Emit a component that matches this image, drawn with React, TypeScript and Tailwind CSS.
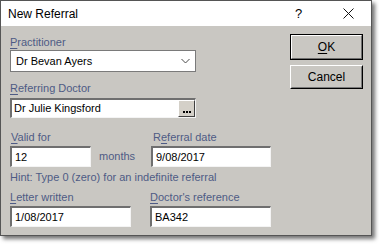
const Label = ({ pre, key1, post, className = '' }: { pre?: string; key1: string; post: string; className?: string }) => (
    <div className={`h-[14px] leading-[14px] text-[#4e5b85] ${className}`}>
        {pre}
        <span className="underline underline-offset-[2px]">{key1}</span>
        {post}
    </div>
);

const Edit = ({ value, className = '' }: { value: string; className?: string }) => (
    <div
        className={`h-[21px] bg-white border-t-2 border-l-2 border-r border-b border-t-[#6f6f6f] border-l-[#6f6f6f] border-r-[#f4f4f4] border-b-[#f4f4f4] pl-[3px] leading-[18px] text-black flex items-center ${className}`}
    >
        {value}
    </div>
);

export default function App() {
    return (
        <div className="w-[379px] h-[244px] bg-white font-['Liberation_Sans',Arial,sans-serif] text-[11px]">
            <div className="w-[372px] h-[236px] border border-[#555555] bg-[#c9c7c2] shadow-[3px_3px_4px_rgba(0,0,0,0.55)] flex flex-col">
                {/* Title bar */}
                <div className="h-[25px] bg-white flex items-center pl-[7px] text-[12px] text-black">
                    <span className="flex-1">New Referral</span>
                    <span className="w-[12px] text-[13px] mr-[36px]">?</span>
                    <svg width="11" height="11" viewBox="0 0 11 11" className="mr-[17px]">
                        <path d="M0.5 0.5 L10.5 10.5 M10.5 0.5 L0.5 10.5" stroke="#111" strokeWidth="1" />
                    </svg>
                </div>

                {/* Body */}
                <div className="flex-1 flex">
                    <div className="w-[280px] pl-[9px] flex flex-col">
                        <Label key1="P" post="ractitioner" className="mt-[9px]" />
                        <div className="mt-[1px] w-[186px] h-[22px] bg-white border border-[#7a7a7a] flex items-center pl-[5px] pr-[5px] text-black">
                            <span className="flex-1">Dr Bevan Ayers</span>
                            <svg width="9" height="6" viewBox="0 0 9 6">
                                <path d="M0.5 1 L4.5 5 L8.5 1" fill="none" stroke="#4a4a4a" strokeWidth="1" />
                            </svg>
                        </div>

                        <Label key1="R" post="eferring Doctor" className="mt-[9px]" />
                        <div className="mt-[3px] w-[186px] h-[20px] bg-white border-t-2 border-l-2 border-r border-b border-t-[#6f6f6f] border-l-[#6f6f6f] border-r-[#f4f4f4] border-b-[#f4f4f4] flex items-center pl-[2px] text-black">
                            <span className="flex-1">Dr Julie Kingsford</span>
                            <div className="w-[17px] h-[17px] bg-[#d4d0c8] border border-t-white border-l-white border-r-[#404040] border-b-[#404040] flex items-end justify-center pb-[3px] gap-[1px]">
                                <span className="w-[2px] h-[2px] bg-black" />
                                <span className="w-[2px] h-[2px] bg-black" />
                                <span className="w-[2px] h-[2px] bg-black" />
                            </div>
                        </div>

                        <div className="mt-[12px] flex">
                            <div className="w-[141px] flex flex-col">
                                <Label key1="V" post="alid for" className="ml-[1px]" />
                                <div className="mt-[2px] flex items-center">
                                    <Edit value="12" className="w-[81px]" />
                                    <span className="ml-[8px] text-[#4e5b85]">months</span>
                                </div>
                            </div>
                            <div className="flex flex-col">
                                <Label pre="R" key1="e" post="ferral date" className="ml-[2px]" />
                                <Edit value="9/08/2017" className="mt-[2px] w-[120px]" />
                            </div>
                        </div>

                        <div className="mt-[3px] h-[14px] leading-[14px] text-[#4e5b85]">
                            Hint: Type 0 (zero) for an indefinite referral
                        </div>

                        <div className="mt-[6px] flex">
                            <div className="w-[140px] flex flex-col">
                                <Label key1="L" post="etter written" />
                                <Edit value="1/08/2017" className="mt-[2px] w-[121px]" />
                            </div>
                            <div className="flex flex-col">
                                <Label key1="D" post="octor's reference" />
                                <Edit value="BA342" className="mt-[2px] w-[121px]" />
                            </div>
                        </div>
                    </div>

                    {/* Buttons */}
                    <div className="pl-[9px] flex flex-col">
                        <div className="mt-[8px] w-[73px] h-[26px] border border-black">
                            <div className="w-full h-full border border-t-white border-l-white border-r-[#6f6f6f] border-b-[#6f6f6f] flex items-center justify-center text-black text-[12px]">
                                <span>
                                    <span className="underline underline-offset-[2px]">O</span>K
                                </span>
                            </div>
                        </div>
                        <div className="mt-[5px] w-[73px] h-[24px] border border-t-white border-l-white border-r-black border-b-black">
                            <div className="w-full h-full border border-transparent border-r-[#7a7a7a] border-b-[#7a7a7a] flex items-center justify-center text-black text-[12px]">
                                Cancel
                            </div>
                        </div>
                    </div>
                </div>
            </div>
        </div>
    );
}
